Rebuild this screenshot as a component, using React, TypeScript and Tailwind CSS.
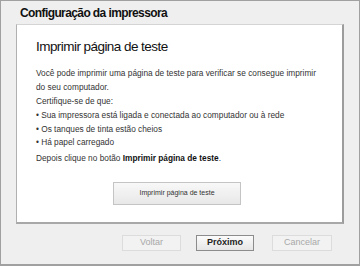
export default function App() {
  const font = { fontFamily: '"Liberation Sans", Arial, sans-serif' }
  return (
    <div
      className="w-[360px] h-[266px] bg-[#efefef] border border-[#a0a0a0] border-b-2 flex flex-col text-[#222]"
      style={font}
    >
      <h1 className="pl-[19px] pt-[4px] h-[23px] text-[12px] tracking-[-0.6px] font-bold leading-[16px] text-[#111]">
        Configuração da impressora
      </h1>
      <div className="mx-[15px] h-[200px] bg-white border-t border-l border-t-[#d4d4d4] border-l-[#b0b0b0] border-r-2 border-b-2 border-r-[#9c9c9c] border-b-[#a8a8a8] pl-[19px] pr-[10px] flex flex-col">
        <h2 className="mt-[13px] text-[13.5px] tracking-[-0.55px] leading-[18px] text-[#111]">Imprimir página de teste</h2>
        <div className="mt-[10px] text-[8.3px] leading-[14px] text-[#333]">
          <p>
            Você pode imprimir uma página de teste para verificar se consegue imprimir
            <br />
            do seu computador.
          </p>
          <p>Certifique-se de que:</p>
          <ul className="leading-[13.5px] py-[1px]">
            <li>• Sua impressora está ligada e conectada ao computador ou à rede</li>
            <li>• Os tanques de tinta estão cheios</li>
            <li>• Há papel carregado</li>
          </ul>
          <p>
            Depois clique no botão <b className="text-[#111]">Imprimir página de teste</b>.
          </p>
        </div>
        <div className="mt-[17px] flex justify-center pr-[14px]">
          <button className="w-[128px] h-[23px] bg-gradient-to-b from-[#f8f8f8] to-[#e8e8e8] border border-[#c4c4c4] text-[7px] text-[#333]">
            Imprimir página de teste
          </button>
        </div>
      </div>
      <div className="flex justify-end pr-[27px] mt-[11px]">
        <button className="w-[59px] h-[16px] border border-[#dcdcdc] bg-[#f2f2f2] text-[9px] text-[#a8a8a8]">
          Voltar
        </button>
        <button className="ml-[15px] w-[58px] h-[16px] border border-[#8c8c8c] bg-gradient-to-b from-[#fbfbfb] to-[#e6e6e6] text-[9px] font-bold text-[#222]">
          Próximo
        </button>
        <button className="ml-[18px] w-[60px] h-[16px] border border-[#dcdcdc] bg-[#f2f2f2] text-[9px] text-[#a8a8a8]">
          Cancelar
        </button>
      </div>
    </div>
  )
}
